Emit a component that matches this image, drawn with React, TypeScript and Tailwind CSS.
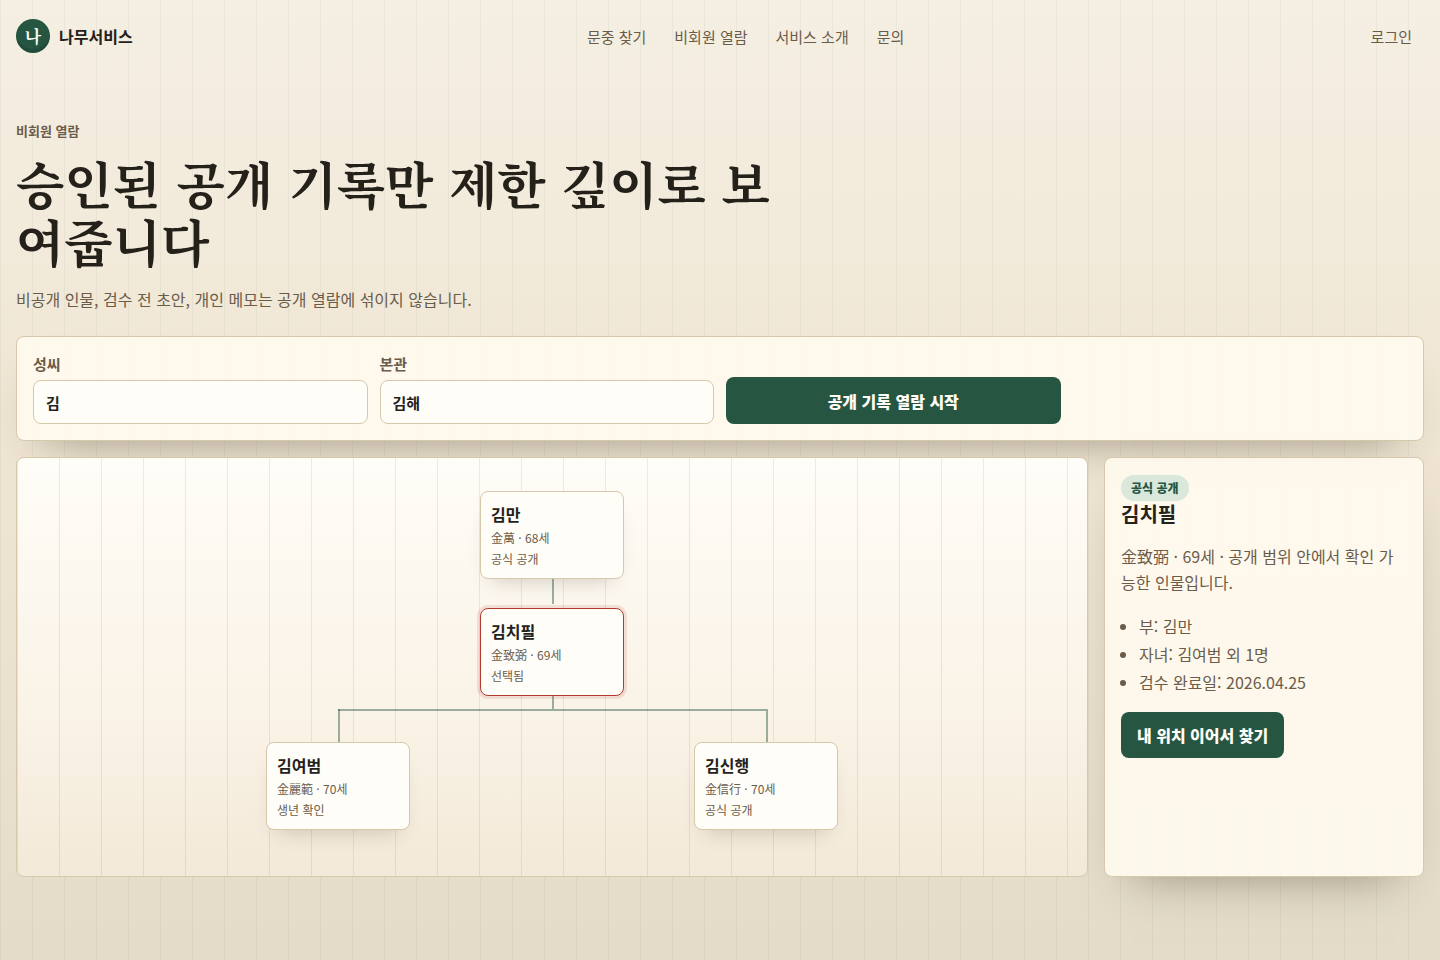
const navItems = ['문중 찾기', '비회원 열람', '서비스 소개', '문의']

const people = [
  { name: '김만', meta: '金萬 · 68세', status: '공식 공개', place: 'left-1/2 top-[8%]' },
  { name: '김치필', meta: '金致弼 · 69세', status: '선택됨', place: 'left-1/2 top-[36%]', selected: true },
  { name: '김여범', meta: '金麗範 · 70세', status: '생년 확인', place: 'left-[30%] top-[68%]' },
  { name: '김신행', meta: '金信行 · 70세', status: '공식 공개', place: 'left-[70%] top-[68%]' },
]

const facts = ['부: 김만', '자녀: 김여범 외 1명', '검수 완료일: 2026.04.25']

const panel =
  'rounded-lg border border-[#d6c8aa] bg-[#fffaef]/92 shadow-[0_24px_48px_-28px_rgba(54,43,24,0.5)]'

const connector = 'absolute bg-[#265642]/45'

function Header() {
  return (
    <header className="flex h-[72px] items-center justify-between px-4">
      <a href="#" className="flex items-center gap-[9px]">
        <span className="grid size-[34px] place-items-center rounded-full bg-[#265642] font-['Noto_Serif_CJK_KR','Noto_Serif_KR',serif] text-[17px] font-bold text-[#fffdf8] shadow-[inset_0_-4px_0_rgba(0,0,0,0.12)]">
          나
        </span>
        <span className="font-bold">나무서비스</span>
      </a>
      <nav className="flex gap-7 pt-0.5 text-[15px] leading-[26px] text-[#6b5c4a]">
        {navItems.map((item) => (
          <a key={item} href="#">
            {item}
          </a>
        ))}
      </nav>
      <a href="#" className="px-3 pt-0.5 text-[15px] leading-[26px] text-[#6b5c4a]">
        로그인
      </a>
    </header>
  )
}

function SearchForm() {
  return (
    <form className={`${panel} grid grid-cols-4 items-end gap-3 p-4`}>
      <label className="grid gap-[5px] text-[15px] leading-[22px] font-bold text-[#6b5c4a]">
        성씨
        <input
          defaultValue="김"
          className="h-11 w-full rounded-lg border border-[#d6c8aa] bg-[#fffdf8] px-3 text-[#24211b]"
        />
      </label>
      <label className="grid gap-[5px] text-[15px] leading-[22px] font-bold text-[#6b5c4a]">
        본관
        <input
          defaultValue="김해"
          className="h-11 w-full rounded-lg border border-[#d6c8aa] bg-[#fffdf8] px-3 text-[#24211b]"
        />
      </label>
      <button type="button" className="h-[47px] rounded-lg bg-[#265642] font-extrabold text-[#fffdf8]">
        공개 기록 열람 시작
      </button>
    </form>
  )
}

function FamilyTree() {
  return (
    <section className="relative min-h-[420px] overflow-hidden rounded-lg border border-[#d6c8aa] bg-[repeating-linear-gradient(90deg,rgba(80,80,50,0.11)_0_1px,transparent_1px_42px),linear-gradient(180deg,#fffdf8,#faf3e7_60%,#f3e9d8)]">
      {/* generation connectors */}
      <span className={`${connector} top-[28%] left-1/2 h-[7%] w-0.5`} />
      <span className={`${connector} top-[56%] left-1/2 h-[4%] w-0.5`} />
      <span className={`${connector} top-[60%] left-[30%] h-0.5 w-[40%]`} />
      <span className={`${connector} top-[60%] left-[30%] h-[9%] w-0.5`} />
      <span className={`${connector} top-[60%] left-[70%] h-[9%] w-0.5`} />

      {people.map((p) => (
        <button
          key={p.name}
          type="button"
          className={`absolute flex h-[88px] w-36 -translate-x-1/2 flex-col rounded-lg border bg-[#fffdf8] px-2.5 pt-[9px] text-left ${p.place} ${
            p.selected
              ? 'border-[#b53a2e] shadow-[0_0_0_3px_rgba(181,58,46,0.13)]'
              : 'border-[#d6c8aa] shadow-[0_12px_20px_-12px_rgba(54,43,24,0.25)]'
          }`}
        >
          <strong className="leading-[26px]">{p.name}</strong>
          <span className="text-xs leading-[21px] text-[#6b5c4a]">{p.meta}</span>
          <span className="text-xs leading-[21px] text-[#6b5c4a]">{p.status}</span>
        </button>
      ))}
    </section>
  )
}

function PersonPanel() {
  return (
    <aside className={`${panel} px-4 pt-[17px] pb-4 text-[#6b5c4a]`}>
      <span className="flex h-[26px] w-fit items-center rounded-full bg-[#dae8dc] px-2.5 text-xs font-extrabold text-[#265642]">
        공식 공개
      </span>
      <h2 className="text-xl leading-[25px] font-bold text-[#24211b]">김치필</h2>
      <p className="mt-[17px] leading-[26px]">金致弼 · 69세 · 공개 범위 안에서 확인 가능한 인물입니다.</p>
      <ul className="mt-[17px] list-disc pl-[18px] leading-7">
        {facts.map((fact) => (
          <li key={fact}>{fact}</li>
        ))}
      </ul>
      <button type="button" className="mt-4 h-[46px] rounded-lg bg-[#265642] px-4 font-extrabold text-[#fffdf8]">
        내 위치 이어서 찾기
      </button>
    </aside>
  )
}

export default function App() {
  return (
    <div
      lang="ko"
      className="min-h-screen bg-[repeating-linear-gradient(90deg,rgba(38,86,66,0.05)_0_1px,transparent_1px_32px),linear-gradient(180deg,#f5efe3,#efe5d2_48%,#e4dcc9)] font-['Noto_Sans_CJK_KR',sans-serif] text-base text-[#24211b]"
    >
      <Header />
      <main className="px-4 pt-12 pb-20">
        <p className="text-[13px] leading-[21px] font-bold text-[#6b5c4a]">비회원 열람</p>
        <h1 className="mt-3 max-w-[760px] font-['Noto_Serif_CJK_KR','Noto_Serif_KR',serif] text-[50px] leading-[58px] font-bold">
          승인된 공개 기록만 제한 깊이로 보여줍니다
        </h1>
        <p className="mt-4 leading-7 text-[#6b5c4a]">
          비공개 인물, 검수 전 초안, 개인 메모는 공개 열람에 섞이지 않습니다.
        </p>
        <div className="mt-[23px] grid gap-4">
          <SearchForm />
          <div className="grid grid-cols-[minmax(0,1fr)_320px] gap-4">
            <FamilyTree />
            <PersonPanel />
          </div>
        </div>
      </main>
    </div>
  )
}
